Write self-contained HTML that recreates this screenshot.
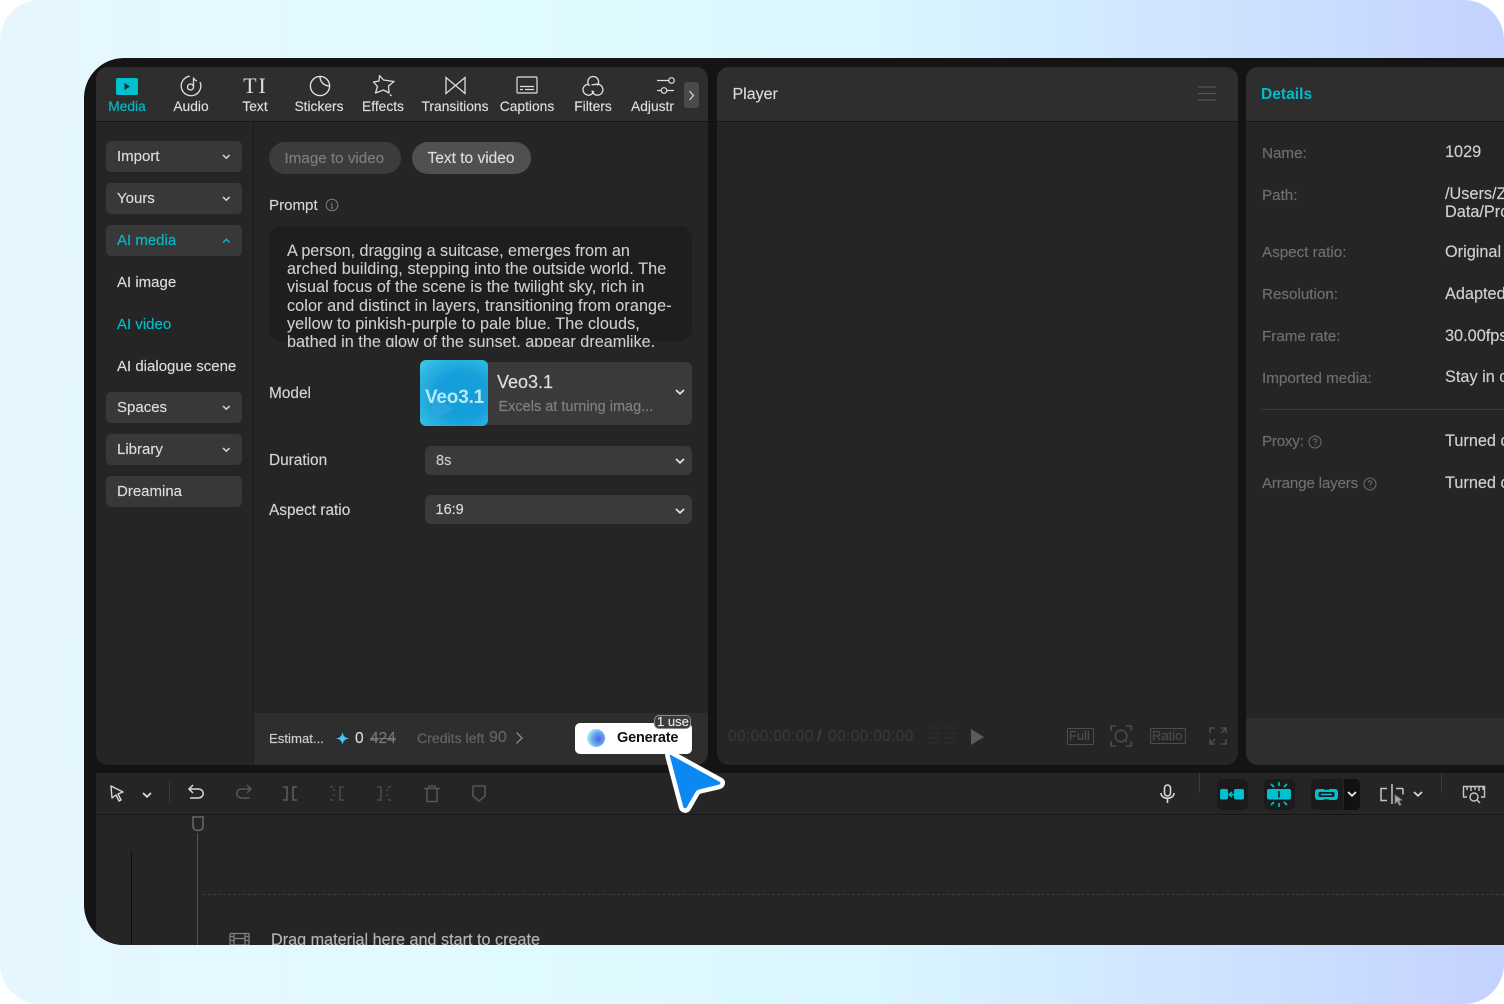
<!DOCTYPE html>
<html><head><meta charset="utf-8">
<style>
html,body{margin:0;padding:0;background:#fff;width:1504px;height:1004px;overflow:hidden}
body{font-family:"Liberation Sans",sans-serif;position:relative}
#bg{position:absolute;left:0;top:0;width:1504px;height:1004px;border-radius:40px;overflow:hidden;background:linear-gradient(90deg,#e6f6ff 0%,#e0fbff 35%,#daf6ff 58%,#cfe5ff 78%,#c4d2ff 100%)}
#app{position:absolute;left:84px;top:58px;width:1420px;height:887px;background:#141414;border-radius:40px 0 0 40px;overflow:hidden}
.a,.t{position:absolute}
.t{white-space:nowrap;font-size:14px;line-height:18px;color:#cfcfcf;-webkit-text-stroke:.15px currentColor}
.p{position:absolute;background:#252525}
.hd{position:absolute;background:#2e2e2e;border-bottom:1px solid #161616}
.btn{position:absolute;left:22px;width:136px;height:31px;background:#383838;border-radius:5px}
.sb{left:33px;font-size:15px;color:#dcdcdc}
.tab{font-size:13.8px;color:#dedede;text-align:center;transform:translateX(-50%)}
.sel{position:absolute;background:#3a3a3a;border-radius:6px}
.lb{color:#6f6f6f;font-size:15.2px}
.v{color:#d0d0d0;font-size:16.3px}
.f{font-size:15.4px;color:#d5d5d5}
svg{position:absolute;overflow:visible;fill:none}
.ln{position:absolute;white-space:nowrap;font-size:16.2px;line-height:18px;color:#cfcfcf;-webkit-text-stroke:.1px currentColor}
</style></head><body>
<div id="bg"></div>
<div id="app">
<!-- media panel -->
<div class="p" style="left:12px;top:9px;width:612px;height:698px;border-radius:12px;overflow:hidden"></div>
<div class="hd" style="left:12px;top:9px;width:612px;height:54px;border-radius:12px 12px 0 0"></div>
<div class="a" style="left:169px;top:64px;width:1px;height:643px;background:#1b1b1b"></div>
<div class="a" style="left:170px;top:655px;width:454px;height:52px;background:#2e2e2e;border-radius:0 0 12px 0"></div>

<!-- tabs -->
<div class="a" style="left:32px;top:20px;width:22px;height:17px;background:#00c1cd;border-radius:2px"></div>
<svg style="left:32px;top:20px" width="22" height="17"><path d="M8.500 5v7l5.500-3.500z" fill="#173338"/></svg>
<div class="t tab" style="left:43px;top:40px;color:#00bcc9">Media</div>
<svg style="left:96px;top:17px" width="22" height="22" stroke="#dedede" stroke-width="1.300"><path d="M9.800 1.200A9.800 9.800 0 1 0 20 7"/><circle cx="10.500" cy="12" r="3"/><path d="M13.500 12V2.500c.5 2 1.800 3 3.500 3.200"/></svg>
<div class="t tab" style="left:107px;top:40px">Audio</div>
<div class="t tab" style="left:171.500px;top:16px;font-family:'Liberation Serif',serif;font-size:22px;line-height:24px;letter-spacing:2px;color:#dedede;-webkit-text-stroke:0">TI</div>
<div class="t tab" style="left:171px;top:40px">Text</div>
<svg style="left:225px;top:17px" width="22" height="22" stroke="#dedede" stroke-width="1.400"><path d="M11 1.400a9.600 9.600 0 1 0 9.600 9.600c-5.500 0-9.600-4-9.600-9.600z"/><path d="M11 1.400c5.500 0 9.600 4.300 9.600 9.600"/></svg>
<div class="t tab" style="left:235px;top:40px">Stickers</div>
<svg style="left:288px;top:16px" width="23" height="24" stroke="#dedede" stroke-width="1.300" stroke-linejoin="round"><path d="M7.500 1.500l4 4.500 10.500 1.500-5.500 4.500 .5 7-5.500-3-8 3 2-6.500-4-4.500 5.500-1z"/><path d="M18 20.500l1.500 1.500"/></svg>
<div class="t tab" style="left:299px;top:40px">Effects</div>
<svg style="left:361px;top:18px" width="21" height="19" stroke="#dedede" stroke-width="1.300"><path d="M1 1.500v16L10.500 9.500zM20 1.500v16L10.500 9.500z"/></svg>
<div class="t tab" style="left:371px;top:40px">Transitions</div>
<svg style="left:432px;top:18px" width="22" height="18" stroke="#dedede" stroke-width="1.200"><rect x="1" y="1" width="20" height="16" rx="1"/><path d="M4 10.500h14M4 13.500h3M9 13.500h9"/></svg>
<div class="t tab" style="left:443px;top:40px">Captions</div>
<svg style="left:498px;top:17px" width="22" height="22" stroke="#dedede" stroke-width="1.300"><path d="M7.500 10.800A5.400 5.400 0 1 1 15.200 10.500"/><path d="M5.500 9.300A5.500 5.500 0 1 0 11.800 16"/><path d="M10 15.500A5.500 5.500 0 1 0 15 9.200c-2.500 0-4.500 1.300-5.500 .1"/></svg>
<div class="t tab" style="left:509px;top:40px">Filters</div>
<svg style="left:572px;top:17px" width="19" height="22" stroke="#dedede" stroke-width="1.200"><path d="M1 5.500h12M1 15.500h4M11 15.500h7"/><circle cx="15.500" cy="5.500" r="2.800"/><circle cx="8" cy="15.500" r="2.800"/></svg>
<div class="a" style="left:547px;top:40px;width:43px;height:18px;overflow:hidden"><div class="t" style="left:0;top:0;font-size:13.800px;color:#dedede">Adjustment</div></div>
<div class="a" style="left:600px;top:24px;width:15px;height:26px;background:#4a4a4a;border-radius:3px"></div>
<svg style="left:604px;top:32px" width="7" height="11" stroke="#cfcfcf" stroke-width="1.300"><path d="M1.500 1l4 4.500-4 4.500"/></svg>

<!-- sidebar -->
<div class="btn" style="top:83px"></div><div class="t sb" style="top:90px">Import</div>
<div class="btn" style="top:125px"></div><div class="t sb" style="top:132px">Yours</div>
<div class="btn" style="top:167px"></div><div class="t sb" style="top:174px;color:#00bcc9">AI media</div>
<div class="t sb" style="top:216px">AI image</div>
<div class="t sb" style="top:258px;color:#00bcc9">AI video</div>
<div class="t sb" style="top:300px">AI dialogue scene</div>
<div class="btn" style="top:334px"></div><div class="t sb" style="top:341px">Spaces</div>
<div class="btn" style="top:376px"></div><div class="t sb" style="top:383px">Library</div>
<div class="btn" style="top:418px"></div><div class="t sb" style="top:425px">Dreamina</div>
<svg style="left:138px;top:96px" width="9" height="6" stroke="#d5d5d5" stroke-width="1.500"><path d="M1 1l3.300 3.200L7.600 1"/></svg>
<svg style="left:138px;top:138px" width="9" height="6" stroke="#d5d5d5" stroke-width="1.500"><path d="M1 1l3.300 3.200L7.600 1"/></svg>
<svg style="left:138px;top:180px" width="9" height="6" stroke="#00bcc9" stroke-width="1.500"><path d="M1 4.500l3.300-3.200 3.300 3.200"/></svg>
<svg style="left:138px;top:347px" width="9" height="6" stroke="#d5d5d5" stroke-width="1.500"><path d="M1 1l3.300 3.200L7.600 1"/></svg>
<svg style="left:138px;top:389px" width="9" height="6" stroke="#d5d5d5" stroke-width="1.500"><path d="M1 1l3.300 3.200L7.600 1"/></svg>

<!-- pills -->
<div class="a" style="left:185px;top:84px;width:132px;height:32px;background:#3c3c3c;border-radius:16px"></div>
<div class="t" style="left:200.500px;top:92px;font-size:15.200px;color:#7d7d7d">Image to video</div>
<div class="a" style="left:328px;top:84px;width:119px;height:32px;background:#505050;border-radius:16px"></div>
<div class="t" style="left:343.500px;top:92px;font-size:15.500px;color:#dcdcdc">Text to video</div>
<div class="t" style="left:185px;top:139px;font-size:15.100px;color:#d5d5d5">Prompt</div>
<svg style="left:241px;top:140px" width="14" height="14" stroke="#7d7d7d" stroke-width="1"><circle cx="7" cy="7" r="5.800"/><path d="M7 6v4M5.800 6H7M5.800 10h2.400M7 4v.8"/></svg>

<!-- prompt -->
<div class="a" style="left:185px;top:168px;width:423px;height:115px;background:#1e1e1e;border-radius:12px"></div>
<div class="a" style="left:185px;top:168px;width:423px;height:122px;overflow:hidden">
<div class="ln" style="left:18px;top:16px;letter-spacing:-.04px">A person, dragging a suitcase, emerges from an</div>
<div class="ln" style="left:18px;top:34px;letter-spacing:.1px">arched building, stepping into the outside world. The</div>
<div class="ln" style="left:18px;top:52px;letter-spacing:.06px">visual focus of the scene is the twilight sky, rich in</div>
<div class="ln" style="left:18px;top:71px;letter-spacing:.09px">color and distinct in layers, transitioning from orange-</div>
<div class="ln" style="left:18px;top:89px;letter-spacing:.08px">yellow to pinkish-purple to pale blue. The clouds,</div>
<div class="ln" style="left:18px;top:107px;height:14px;overflow:hidden;letter-spacing:.02px">bathed in the glow of the sunset, appear dreamlike.</div>
</div>

<!-- model -->
<div class="t f" style="left:185px;top:327px">Model</div>
<div class="sel" style="left:340px;top:304px;width:268px;height:63px"></div>
<div class="a" style="left:336px;top:302px;width:68px;height:66px;border-radius:6px;overflow:hidden;background:radial-gradient(ellipse at 60% 55%,#129ed9 0%,#169fda 45%,#2fb8e2 80%,#45cbea 100%)"></div>
<svg style="left:348px;top:337px" width="22" height="28"><path d="M0 2l22 12L0 27z" fill="#2fa9e0" opacity=".7"/></svg>
<div class="t" style="left:341px;top:329px;font-size:19px;line-height:22px;font-weight:bold;color:#b5e8f6;letter-spacing:-.2px;-webkit-text-stroke:0">Veo3.1</div>
<div class="t" style="left:413px;top:314px;font-size:18px;line-height:20px;color:#e0e0e0">Veo3.1</div>
<div class="t" style="left:414.500px;top:340px;font-size:14.500px;color:#808080">Excels at turning imag...</div>
<svg style="left:591px;top:331px" width="10" height="7" stroke="#e0e0e0" stroke-width="1.800"><path d="M1 1l4 3.800L9 1"/></svg>

<div class="t f" style="left:185px;top:394px">Duration</div>
<div class="sel" style="left:341px;top:388px;width:267px;height:29px"></div>
<div class="t" style="left:352px;top:394px;font-size:14.500px;color:#cfcfcf">8s</div>
<svg style="left:591px;top:400px" width="10" height="7" stroke="#e0e0e0" stroke-width="1.800"><path d="M1 1l4 3.800L9 1"/></svg>

<div class="t f" style="left:185px;top:444px">Aspect ratio</div>
<div class="sel" style="left:341px;top:437px;width:267px;height:29px"></div>
<div class="t" style="left:351.500px;top:443px;font-size:14.500px;color:#dcdcdc">16:9</div>
<svg style="left:591px;top:450px" width="10" height="7" stroke="#e0e0e0" stroke-width="1.800"><path d="M1 1l4 3.800L9 1"/></svg>

<!-- footer -->
<div class="t" style="left:185px;top:672px;font-size:13.200px;color:#cfcfcf">Estimat...</div>
<svg style="left:252px;top:674px" width="13" height="13"><path d="M6.500 0c.6 4 2.400 5.800 6.500 6.500-4.100.7-5.900 2.500-6.500 6.500C5.900 9 4.100 7.200 0 6.500 4.100 5.800 5.900 4 6.500 0z" fill="#4cc3f5"/></svg>
<div class="t" style="left:271px;top:672px;font-size:15.500px;color:#dcdcdc">0</div>
<div class="t" style="left:286px;top:672px;font-size:15.500px;color:#777;text-decoration:line-through">424</div>
<div class="t" style="left:333px;top:671px;font-size:14.100px;color:#646464">Credits left</div>
<div class="t" style="left:405px;top:671px;font-size:16px;color:#646464">90</div>
<svg style="left:431px;top:673px" width="9" height="14" stroke="#8a8a8a" stroke-width="1.300"><path d="M1.500 1.500l5.500 5.500-5.500 5.500"/></svg>
<div class="a" style="left:491px;top:665px;width:117px;height:31px;background:#fff;border-radius:5px"></div>
<div class="a" style="left:503px;top:671px;width:18px;height:18px;border-radius:50%;background:radial-gradient(circle at 65% 55%,#5a5ee8 0%,#64a5ee 40%,#a8e8ee 72%,#fff 100%)"></div>
<div class="t" style="left:533px;top:671px;font-size:14.500px;font-weight:bold;color:#111;letter-spacing:-.2px;-webkit-text-stroke:0">Generate</div>
<div class="a" style="left:570px;top:657px;width:37px;height:14px;background:#3b3b3b;border-radius:5px;border:1px solid #8a8a8a;box-sizing:border-box"></div>
<div class="t" style="left:573px;top:656px;font-size:13px;line-height:16px;color:#e8e8e8">1 use</div>

<!-- player -->
<div class="p" style="left:633px;top:9px;width:521px;height:698px;border-radius:12px"></div>
<div class="hd" style="left:633px;top:9px;width:521px;height:54px;border-radius:12px 12px 0 0"></div>
<div class="t" style="left:648.500px;top:28px;font-size:16px;color:#dcdcdc">Player</div>
<svg style="left:1114px;top:28px" width="18" height="15" stroke="#555" stroke-width="1.300"><path d="M0 1h18M0 7.500h18M0 14h18"/></svg>
<div class="t" style="left:644px;top:670px;font-size:15.500px;color:#383838;letter-spacing:.35px">00:00:00:00</div>
<div class="t" style="left:733px;top:670px;font-size:15.500px;color:#484848">/</div>
<div class="t" style="left:744px;top:670px;font-size:15.500px;color:#383838;letter-spacing:.35px">00:00:00:00</div>
<svg style="left:844px;top:668px" width="28" height="21" stroke="#2f2f2f" stroke-width="1.200"><path d="M0 2h12M0 7h12M0 12h12M0 17h12M16 2h12M16 7h12M16 12h12M16 17h12"/></svg>
<svg style="left:887px;top:671px" width="13" height="16"><path d="M0 0l13 8-13 8z" fill="#5a5a5a"/></svg>
<div class="a" style="left:983px;top:670px;width:25px;height:15px;border:1px solid #4d4d4d;border-radius:1px;box-sizing:content-box"></div>
<div class="t" style="left:985px;top:669px;font-size:13px;color:#4d4d4d">Full</div>
<svg style="left:1026px;top:667px" width="22" height="22" stroke="#4d4d4d" stroke-width="1.500"><path d="M1 6V1h5M16 1h5v5M21 16v5h-5M6 21H1v-5"/><circle cx="11" cy="11" r="5.800"/><path d="M15 15l2 2"/></svg>
<div class="a" style="left:1066px;top:670px;width:34px;height:14px;border:1px solid #4d4d4d;border-radius:1px"></div>
<div class="t" style="left:1068px;top:669px;font-size:13px;color:#4d4d4d">Ratio</div>
<svg style="left:1125px;top:669px" width="18" height="18" stroke="#4d4d4d" stroke-width="1.500"><path d="M1 6V1h5M12 1h5v5M17 12v5h-5M6 17H1v-5M12 6l5-5M1 17l5-5"/></svg>

<!-- details -->
<div class="p" style="left:1162px;top:9px;width:270px;height:698px;border-radius:12px 0 0 12px"></div>
<div class="hd" style="left:1162px;top:9px;width:270px;height:54px;border-radius:12px 0 0 0"></div>
<div class="a" style="left:1162px;top:660px;width:258px;height:47px;background:#2e2e2e;border-radius:0 0 0 12px"></div>
<div class="t" style="left:1177px;top:28px;font-size:15.600px;font-weight:bold;color:#00bcc9;-webkit-text-stroke:0">Details</div>
<div class="t lb" style="left:1178px;top:87px">Name:</div><div class="t v" style="left:1361px;top:85px">1029</div>
<div class="t lb" style="left:1178px;top:129px">Path:</div><div class="t v" style="left:1361px;top:127px">/Users/Z</div><div class="t v" style="left:1361px;top:145px">Data/Pro</div>
<div class="t lb" style="left:1178px;top:186px">Aspect ratio:</div><div class="t v" style="left:1361px;top:185px">Original</div>
<div class="t lb" style="left:1178px;top:228px">Resolution:</div><div class="t v" style="left:1361px;top:227px">Adapted</div>
<div class="t lb" style="left:1178px;top:270px">Frame rate:</div><div class="t v" style="left:1361px;top:269px">30.00fps</div>
<div class="t lb" style="left:1178px;top:312px">Imported media:</div><div class="t v" style="left:1361px;top:310px">Stay in c</div>
<div class="a" style="left:1178px;top:351px;width:242px;height:1px;background:#3a3a3a"></div>
<div class="t lb" style="left:1178px;top:375px;letter-spacing:-.25px">Proxy:</div><div class="t v" style="left:1361px;top:374px">Turned c</div>
<svg style="left:1224px;top:377px" width="14" height="14" stroke="#6f6f6f" stroke-width="1"><circle cx="7" cy="7" r="6"/><path d="M5.200 5.600c0-2.300 3.600-2.300 3.600-.1 0 1.300-1.800 1.300-1.800 2.900M7 9.600v1"/></svg>
<div class="t lb" style="left:1178px;top:417px;letter-spacing:-.2px">Arrange layers</div><div class="t v" style="left:1361px;top:416px">Turned c</div>
<svg style="left:1279px;top:419px" width="14" height="14" stroke="#6f6f6f" stroke-width="1"><circle cx="7" cy="7" r="6"/><path d="M5.200 5.600c0-2.300 3.600-2.300 3.600-.1 0 1.300-1.800 1.300-1.800 2.900M7 9.600v1"/></svg>

<!-- timeline -->
<div class="a" style="left:12px;top:715px;width:1408px;height:172px;background:#252525"></div>
<div class="a" style="left:12px;top:756px;width:1408px;height:1px;background:#161616"></div>
<svg style="left:26px;top:727px" width="14" height="17" stroke="#d8d8d8" stroke-width="1.400" stroke-linejoin="round"><path d="M1 1l12 6-5 2 3 6-2 1-3-6-4 3z"/></svg>
<svg style="left:58px;top:734px" width="10" height="7" stroke="#e0e0e0" stroke-width="1.700"><path d="M1 1l4 3.800L9 1"/></svg>
<div class="a" style="left:85px;top:724px;width:1px;height:21px;background:#3a3a3a"></div>
<svg style="left:104px;top:726px" width="17" height="19" stroke="#d8d8d8" stroke-width="1.500"><path d="M5 1L1 5l4 4M1 5h9c7 0 7 9 0 9H2"/></svg>
<svg style="left:151px;top:726px" width="17" height="19" stroke="#555" stroke-width="1.500"><path d="M12 1l4 4-4 4M16 5H7c-7 0-7 9 0 9h8"/></svg>
<svg style="left:198px;top:728px" width="16" height="15" stroke="#555" stroke-width="1.800"><path d="M1 1h4v13H1M15 1h-4v13h4"/></svg>
<svg style="left:245px;top:728px" width="16" height="15" stroke="#4a4a4a" stroke-width="1.600"><path d="M1 1h3M1 14h3M5 3v2M5 8v2M15 1h-4v13h4"/></svg>
<svg style="left:292px;top:728px" width="16" height="15" stroke="#4a4a4a" stroke-width="1.600"><path d="M1 1h4v13H1M12 1h3M12 14h3M11 3v2M11 8v2"/></svg>
<svg style="left:340px;top:727px" width="16" height="18" stroke="#555" stroke-width="1.600"><path d="M0 3.500h16M5 3V1h6v2M3 4v12.500h10V4"/></svg>
<svg style="left:388px;top:727px" width="14" height="17" stroke="#555" stroke-width="1.600" stroke-linejoin="round"><path d="M1 1h12v10l-6 5-6-5z"/></svg>
<svg style="left:107px;top:758px" width="14" height="16" stroke="#666" stroke-width="1.600"><path d="M2 1h10v9c0 6-10 6-10 0z"/></svg>
<div class="a" style="left:113px;top:775px;width:1px;height:112px;background:#555"></div>
<div class="a" style="left:47px;top:794px;width:1px;height:93px;background:#0e0e0e"></div>
<div class="a" style="left:119px;top:836px;width:1301px;height:0;border-top:1px dashed #3c3c3c"></div>
<svg style="left:146px;top:875px" width="19" height="12" stroke="#808080" stroke-width="1.300"><path d="M0 .5h19M0 12h19M0 .5V12M19 .5V12M4 .5V12M15 .5V12M4 5.500h11M0 3.500h4M15 3.500h4M0 7.500h4M15 7.500h4"/></svg>
<div class="a" style="left:180px;top:870px;width:300px;height:17px;overflow:hidden"><div class="t" style="left:7px;top:3px;font-size:16.200px;color:#b5b5b5">Drag material here and start to create</div></div>

<!-- right toolbar -->
<svg style="left:1076px;top:726px" width="16" height="20" stroke="#d8d8d8" stroke-width="1.600"><rect x="4.500" y="1" width="6" height="11" rx="3"/><path d="M1 9c0 7 13 7 13 0M7.500 14v5"/></svg>
<div class="a" style="left:1115px;top:715px;width:1px;height:20px;background:#3a3a3a"></div>
<div class="a" style="left:1357px;top:715px;width:1px;height:20px;background:#3a3a3a"></div>
<div class="a" style="left:1133px;top:721px;width:31px;height:31px;background:#1b1b1b;border-radius:5px"></div>
<svg style="left:1136px;top:730px" width="24" height="13"><rect x="0" y="1" width="8" height="10.500" rx="2" fill="#00c1cd"/><rect x="14" y="1" width="10" height="10.500" rx="2" fill="#00c1cd"/><path d="M9 6.500h7M12 4l-3 2.500 3 2.500" stroke="#00c1cd" stroke-width="1.500"/></svg>
<div class="a" style="left:1180px;top:721px;width:31px;height:31px;background:#1b1b1b;border-radius:5px"></div>
<svg style="left:1183px;top:724px" width="24" height="25"><rect x="0" y="7" width="24" height="10.500" rx="2" fill="#00c1cd"/><path d="M12 9v6.500" stroke="#1b1b1b" stroke-width="1.600"/><path d="M12 0v4M12 21v4M4 2l3 3M20 2l-3 3M4 23l3-3M20 23l-3-3" stroke="#00c1cd" stroke-width="1.600"/></svg>
<div class="a" style="left:1227px;top:721px;width:32px;height:31px;background:#1b1b1b;border-radius:5px 0 0 5px"></div>
<div class="a" style="left:1260px;top:721px;width:16px;height:31px;background:#111;border-radius:0 5px 5px 0"></div>
<svg style="left:1231px;top:731px" width="23" height="12"><rect width="23" height="11" rx="3" fill="#00c1cd"/><rect x="3.500" y="3" width="16" height="5" rx="1.500" fill="#1b1b1b"/><path d="M6 5.500h11" stroke="#00c1cd" stroke-width="1.600"/><path d="M9 0h5M9 11h5" stroke="#1b1b1b" stroke-width="1.500"/></svg>
<svg style="left:1263px;top:733px" width="10" height="7" stroke="#e8e8e8" stroke-width="1.800"><path d="M1 1l4 3.800L9 1"/></svg>
<svg style="left:1296px;top:726px" width="24" height="24" stroke="#c5c5c5" stroke-width="1.500"><path d="M7 4.500H1v12h6M12 0v20M23 4.500h-7M23 4.500v6"/><path d="M15 11l7 5-3 .8 2 4-1.500 .8-2-4-2.500 2z" fill="#aaa" stroke="#777" stroke-width=".8"/></svg>
<svg style="left:1329px;top:733px" width="10" height="7" stroke="#d8d8d8" stroke-width="1.700"><path d="M1 1l4 3.800L9 1"/></svg>
<svg style="left:1378px;top:727px" width="24" height="20" stroke="#c5c5c5" stroke-width="1.400"><path d="M5 12H1.500V1.500h21V12H19M5 2v3M9 2v4M13 2v3M17 2v4M21 2v3"/><circle cx="12" cy="12" r="4"/><path d="M15 15l3 3"/></svg>
</div>
<!-- cursor -->
<svg style="left:663px;top:748px" width="64" height="68"><path d="M9 5C6 3.500 4 5 4.500 8L18 59C19 63 24 64 26 60L34 46Q35 44 37 43.500L56 39C60 38 61 34 58 32Z" fill="#0d87f2" stroke="#fff" stroke-width="4.500" stroke-linejoin="round"/></svg>
</body></html>
